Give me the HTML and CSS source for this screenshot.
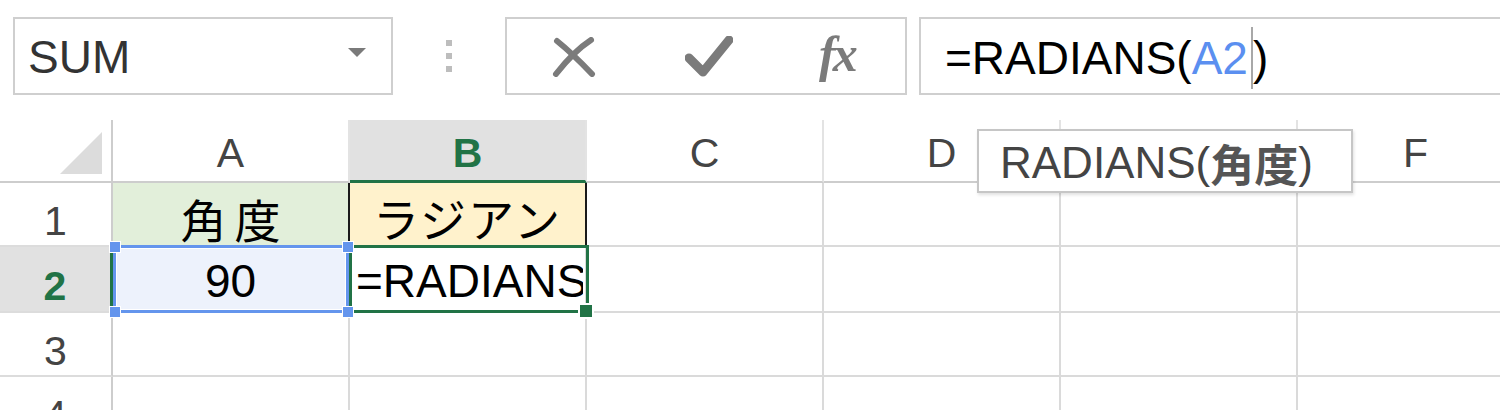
FILE: index.html
```html
<!DOCTYPE html>
<html lang="ja">
<head>
<meta charset="utf-8">
<link rel="stylesheet" href="styles.css">
</head>
<body>
<div class="app">
  <div class="fbar">
    <div class="namebox">
      <span class="nb-text">SUM</span>
      <span class="nb-arrow"></span>
    </div>
    <div class="grip"><i></i><i></i><i></i></div>
    <div class="fxbox">
      <svg class="ic-x" width="44" height="40" viewBox="0 0 44 40">
        <path d="M5 4 Q20 16 40 37" stroke="#7b7b7b" stroke-width="6" stroke-linecap="round" fill="none"/>
        <path d="M39 3 Q22 14 4 37" stroke="#7b7b7b" stroke-width="6" stroke-linecap="round" fill="none"/>
      </svg>
      <svg class="ic-ok" width="48" height="42" viewBox="0 0 48 42">
        <path d="M4 22 L18 36 L44 4" stroke="#7b7b7b" stroke-width="9" stroke-linecap="round" stroke-linejoin="round" fill="none"/>
      </svg>
      <span class="fx">fx</span>
    </div>
    <div class="formula">=RADIANS(<span class="ref">A2</span><span class="caret"></span>)</div>
  </div>

  <div class="sheet">
    <div class="hdr corner"><span class="tri"></span></div>
    <div class="hdr col">A</div>
    <div class="hdr col col-sel">B</div>
    <div class="hdr col">C</div>
    <div class="hdr col">D</div>
    <div class="hdr col">E</div>
    <div class="hdr col">F</div>

    <div class="rh">1</div>
    <div class="c a1">角度</div>
    <div class="c b1">ラジアン</div>
    <div class="c"></div>
    <div class="c"></div>
    <div class="c"></div>
    <div class="c"></div>

    <div class="rh rh-sel">2</div>
    <div class="c a2">
      <div class="range">
        <i class="h tl"></i><i class="h tr"></i><i class="h bl"></i><i class="h br"></i>
      </div>
      <span class="val">90</span>
    </div>
    <div class="c b2">
      <span class="edit">=RADIANS</span>
      <div class="active"><i class="fill"></i></div>
    </div>
    <div class="c"></div>
    <div class="c"></div>
    <div class="c"></div>
    <div class="c"></div>

    <div class="rh">3</div>
    <div class="c"></div>
    <div class="c"></div>
    <div class="c"></div>
    <div class="c"></div>
    <div class="c"></div>
    <div class="c"></div>

    <div class="rh">4</div>
    <div class="c"></div>
    <div class="c"></div>
    <div class="c"></div>
    <div class="c"></div>
    <div class="c"></div>
    <div class="c"></div>

    <div class="tip">RADIANS(<b>角度</b>)</div>
  </div>
</div>
</body>
</html>
```

FILE: styles.css
```css
html, body {
  margin: 0;
  padding: 0;
  background: #ffffff;
}

.app {
  width: 1500px;
  height: 410px;
  overflow: hidden;
  font-family: "Liberation Sans", "Noto Sans CJK JP", sans-serif;
  color: #000;
}

/* ---------- formula bar ---------- */
.fbar {
  display: flex;
  align-items: flex-start;
  height: 120px;
  box-sizing: border-box;
  padding-top: 17px;
  padding-left: 13px;
}

.namebox {
  width: 380px;
  height: 78px;
  box-sizing: border-box;
  border: 2px solid #cfcfcf;
  display: flex;
  align-items: center;
  padding-left: 13px;
  padding-right: 25px;
}

.nb-text {
  font-size: 46px;
  color: #333;
  flex: 1;
  padding-top: 2px;
}

.nb-arrow {
  width: 0;
  height: 0;
  border-left: 9px solid transparent;
  border-right: 9px solid transparent;
  border-top: 9px solid #7a7a7a;
  margin-top: -8px;
}

.grip {
  width: 112px;
  height: 78px;
  display: flex;
  flex-direction: column;
  align-items: center;
  justify-content: center;
  gap: 7px;
}

.grip i {
  display: block;
  width: 6px;
  height: 6px;
  background: #bdbdbd;
}

.fxbox {
  width: 402px;
  height: 78px;
  box-sizing: border-box;
  border: 2px solid #cfcfcf;
  display: flex;
  align-items: center;
  padding-left: 45px;
}

.ic-x {
  margin-top: 1px;
}

.ic-ok {
  margin-left: 89px;
  margin-top: 2px;
}

.fx {
  margin-left: 86px;
  font-family: "Liberation Serif", "DejaVu Serif", serif;
  font-style: italic;
  font-weight: bold;
  font-size: 50px;
  color: #7b7b7b;
  letter-spacing: -3px;
  margin-top: -4px;
}

.formula {
  margin-left: 12px;
  flex: 1;
  height: 78px;
  box-sizing: border-box;
  border: 2px solid #cfcfcf;
  border-right: none;
  margin-right: -20px;
  display: flex;
  align-items: center;
  padding-left: 24px;
  padding-top: 4px;
  font-size: 46px;
  color: #000;
  white-space: nowrap;
}

.ref {
  color: #5b8ff0;
}

.caret {
  display: inline-block;
  width: 2px;
  height: 62px;
  background: #a8a8a8;
  margin-left: 3px;
  margin-right: 0;
  align-self: center;
}

/* ---------- sheet ---------- */
.sheet {
  position: relative;
  display: grid;
  grid-template-columns: 113px repeat(6, 237px);
  grid-template-rows: 63px 64px 66px 64px 64px;
}

.hdr {
  box-sizing: border-box;
  border-bottom: 2px solid #cdcdcd;
  border-right: 2px solid #e3e3e3;
  display: flex;
  align-items: center;
  justify-content: center;
  font-size: 41px;
  color: #444;
  padding-top: 6px;
}

.corner {
  border-right: 2px solid #cdcdcd;
  justify-content: flex-end;
  align-items: flex-end;
  padding: 0 9px 7px 0;
}

.tri {
  display: block;
  width: 0;
  height: 0;
  border-left: 42px solid transparent;
  border-bottom: 42px solid #dcdcdc;
}

.col-sel {
  background: #e1e1e1;
  border-bottom: 3px solid #217346;
  color: #217346;
  font-weight: bold;
}

.rh {
  box-sizing: border-box;
  border-right: 2px solid #cdcdcd;
  border-bottom: 2px solid #dcdcdc;
  display: flex;
  align-items: center;
  justify-content: center;
  font-size: 41px;
  color: #444;
  padding-top: 14px;
}

.rh-sel {
  background: #e1e1e1;
  border-right: 3px solid #217346;
  color: #217346;
  font-weight: bold;
}

.c {
  position: relative;
  box-sizing: border-box;
  border-right: 2px solid #dadada;
  border-bottom: 2px solid #dadada;
  font-size: 46px;
  display: flex;
  align-items: center;
}

.a1 {
  background: #e2efda;
  border-right: 2px solid #1a1a1a;
  justify-content: center;
  letter-spacing: 8px;
  padding-top: 8px;
  padding-left: 8px;
}

.b1 {
  background: #fff2cc;
  border-right: 2px solid #1a1a1a;
  justify-content: center;
  padding-top: 6px;
  letter-spacing: 2px;
}

.a2 {
  background: #edf2fc;
  justify-content: center;
  padding-top: 4px;
}

.val {
  position: relative;
}

.b2 {
  padding-top: 4px;
}

.edit {
  display: block;
  overflow: hidden;
  white-space: nowrap;
  padding-left: 6px;
  box-sizing: border-box;
  width: 233px;
}

/* range (blue) around A2 */
.range {
  position: absolute;
  left: 0;
  top: -2px;
  width: 236px;
  height: 68px;
  box-sizing: border-box;
  border: 3px solid #6495ed;
  box-shadow: inset 0 0 0 1px #ffffff;
  z-index: 2;
}

.h {
  position: absolute;
  width: 10px;
  height: 10px;
  background: #6495ed;
  box-shadow: 0 0 0 1px #ffffff;
}
.h.tl { left: -6px; top: -6px; }
.h.tr { right: -7px; top: -6px; }
.h.bl { left: -6px; bottom: -7px; }
.h.br { right: -7px; bottom: -7px; }

/* active cell (green) B2 */
.active {
  position: absolute;
  left: -1px;
  top: -2px;
  width: 240px;
  height: 68px;
  box-sizing: border-box;
  border: 3px solid #217346;
  z-index: 1;
}

.fill {
  position: absolute;
  right: -6px;
  bottom: -7px;
  width: 12px;
  height: 12px;
  background: #217346;
  box-shadow: 0 0 0 2px #ffffff;
}

/* tooltip */
.tip {
  position: absolute;
  left: 977px;
  top: 9px;
  width: 376px;
  height: 64px;
  box-sizing: border-box;
  border: 2px solid #c6c6c6;
  background: #fff;
  box-shadow: 1px 2px 3px rgba(0, 0, 0, 0.12);
  display: flex;
  align-items: center;
  padding-left: 21px;
  padding-top: 4px;
  font-size: 44px;
  color: #444;
  z-index: 5;
  white-space: nowrap;
}

.tip b {
  font-weight: bold;
  color: #555;
}
```
